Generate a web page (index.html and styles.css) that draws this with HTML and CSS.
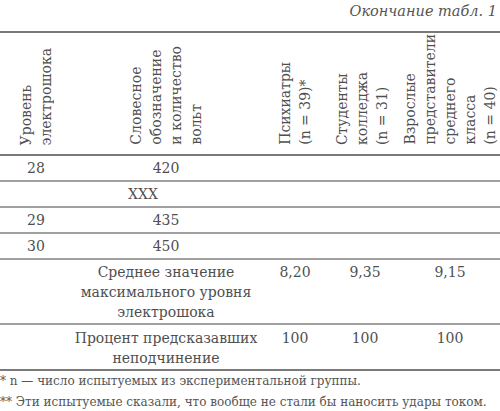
FILE: index.html
```html
<!DOCTYPE html>
<html lang="ru">
<head>
<meta charset="utf-8">
<link rel="stylesheet" href="styles.css">
</head>
<body>
<div class="page">
  <div class="caption">Окончание табл. 1</div>
  <div class="table">
    <div class="row head">
      <div class="cell"><div class="vt">Уровень<br>электрошока</div></div>
      <div class="cell"><div class="vt">Словесное<br>обозначение<br>и количество<br>вольт</div></div>
      <div class="cell"><div class="vt">Психиатры<br>(n = 39)*</div></div>
      <div class="cell c4"><div class="vt">Студенты<br>колледжа<br>(n = 31)</div></div>
      <div class="cell"><div class="vt">Взрослые<br>представители<br>среднего<br>класса<br>(n = 40)</div></div>
    </div>
    <div class="row data">
      <div class="cell">28</div><div class="cell">420</div><div class="cell"></div><div class="cell"></div><div class="cell"></div>
    </div>
    <div class="row data">
      <div class="cell"></div><div class="cell xxx">XXX</div><div class="cell"></div><div class="cell"></div><div class="cell"></div>
    </div>
    <div class="row data">
      <div class="cell">29</div><div class="cell">435</div><div class="cell"></div><div class="cell"></div><div class="cell"></div>
    </div>
    <div class="row data">
      <div class="cell">30</div><div class="cell">450</div><div class="cell"></div><div class="cell"></div><div class="cell"></div>
    </div>
    <div class="row stat s1">
      <div class="cell"></div>
      <div class="cell label">Среднее значение<br>максимального уровня<br>электрошока</div>
      <div class="cell">8,20</div><div class="cell">9,35</div><div class="cell">9,15</div>
    </div>
    <div class="row stat s2">
      <div class="cell"></div>
      <div class="cell label">Процент предсказавших<br>неподчинение</div>
      <div class="cell">100</div><div class="cell">100</div><div class="cell">100</div>
    </div>
  </div>
  <div class="notes">
    <p>* n — число испытуемых из экспериментальной группы.</p>
    <p>** Эти испытуемые сказали, что вообще не стали бы наносить удары током.</p>
  </div>
</div>
</body>
</html>
```
FILE: styles.css
```css
html, body {
  margin: 0;
  padding: 0;
  background: #ffffff;
}
.page {
  width: 500px;
  font-family: "DejaVu Serif", "Liberation Serif", serif;
  font-size: 14px;
  line-height: 20px;
  color: #4f4f4f;
}
.caption {
  height: 31px;
  text-align: right;
  font-style: italic;
  font-size: 14.5px;
  padding-right: 3px;
  line-height: 22px;
  color: #555;
}
.table {
  border-top: 2px solid #7a7a7a;
}
.row {
  display: grid;
  grid-template-columns: 72px 188px 70px 70px 100px;
  border-bottom: 2px solid #a0a0a0;
}
.row.head {
  height: 121px;
  border-bottom-color: #7a7a7a;
}
.head .cell {
  display: flex;
  justify-content: center;
  align-items: flex-end;
  padding-bottom: 9px;
}
.head .c4 {
  padding-right: 6px;
}
.vt {
  writing-mode: vertical-rl;
  transform: rotate(180deg);
  white-space: nowrap;
}
.data {
  height: 24px;
}
.data .cell {
  text-align: center;
  line-height: 24px;
}
.xxx {
  padding-right: 46px;
}
.stat .cell {
  text-align: center;
}
.s1 {
  height: 61px;
  padding-top: 2px;
}
.s2 {
  height: 41px;
  padding-top: 3px;
  border-bottom-color: #7a7a7a;
}
.notes {
  font-size: 12px;
  line-height: 21px;
  color: #555;
}
.notes p {
  margin: 0;
  white-space: nowrap;
}
```
